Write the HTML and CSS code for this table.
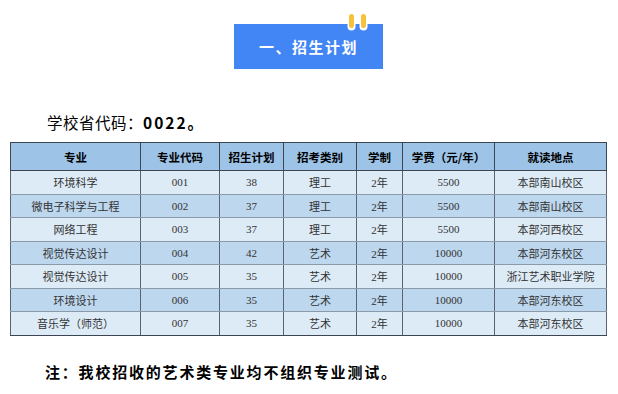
FILE: index.html
```html
<!DOCTYPE html>
<html lang="zh">
<head>
<meta charset="utf-8">
<link rel="stylesheet" href="styles.css">
</head>
<body>
<div class="page">
  <div class="title-wrap">
    <div class="title-box">
      <span class="tab tab-a"></span>
      <span class="tab tab-b"></span>
      <span class="title">一、招生计划</span>
    </div>
  </div>
  <p class="code">学校省代码：<b>0022。</b></p>
  <table class="plan">
    <thead>
      <tr>
        <th class="c1">专业</th><th class="c2">专业代码</th><th class="c3">招生计划</th><th class="c4">招考类别</th><th class="c5">学制</th><th class="c6">学费（元/年）</th><th class="c7">就读地点</th>
      </tr>
    </thead>
    <tbody>
      <tr class="lt"><td>环境科学</td><td>001</td><td>38</td><td>理工</td><td>2年</td><td>5500</td><td>本部南山校区</td></tr>
      <tr class="dk"><td>微电子科学与工程</td><td>002</td><td>37</td><td>理工</td><td>2年</td><td>5500</td><td>本部南山校区</td></tr>
      <tr class="lt"><td>网络工程</td><td>003</td><td>37</td><td>理工</td><td>2年</td><td>5500</td><td>本部河西校区</td></tr>
      <tr class="dk"><td>视觉传达设计</td><td>004</td><td>42</td><td>艺术</td><td>2年</td><td>10000</td><td>本部河东校区</td></tr>
      <tr class="lt"><td>视觉传达设计</td><td>005</td><td>35</td><td>艺术</td><td>2年</td><td>10000</td><td>浙江艺术职业学院</td></tr>
      <tr class="dk"><td>环境设计</td><td>006</td><td>35</td><td>艺术</td><td>2年</td><td>10000</td><td>本部河东校区</td></tr>
      <tr class="lt"><td>音乐学（师范）</td><td>007</td><td>35</td><td>艺术</td><td>2年</td><td>10000</td><td>本部河东校区</td></tr>
    </tbody>
  </table>
  <p class="note">注：我校招收的艺术类专业均不组织专业测试。</p>
</div>
</body>
</html>
```
FILE: styles.css
```css
html, body {
  margin: 0;
  padding: 0;
  background: #ffffff;
}
.page {
  width: 618px;
  height: 394px;
  padding-top: 24px;
  box-sizing: border-box;
  font-family: "Noto Sans CJK SC", "Noto Sans", sans-serif;
  color: #000;
}
.title-wrap {
  display: flex;
  justify-content: flex-start;
  padding-left: 234px;
}
.title-box {
  position: relative;
  width: 149px;
  height: 45px;
  background: #4285f4;
  display: flex;
  align-items: center;
  justify-content: center;
}
.title {
  color: #fff;
  font-weight: bold;
  font-size: 15px;
  letter-spacing: 1.5px;
  line-height: 1;
}
.tab {
  position: absolute;
  top: -10px;
  width: 5px;
  height: 14px;
  background: #f8c13a;
  border-radius: 3px;
  box-shadow: 0 1px 0 1.5px #ffffff;
}
.tab-a { left: 115px; }
.tab-b { left: 127px; }
.code {
  margin: 43px 0 0 47px;
  font-size: 15.5px;
  line-height: 20px;
  letter-spacing: 0.5px;
}
.code b {
  font-weight: bold;
  letter-spacing: 2px;
}
.plan {
  margin: 10px 0 0 10px;
  width: 596px;
  border-collapse: collapse;
  table-layout: fixed;
}
.plan th, .plan td {
  border: 1px solid #5a6470;
  text-align: center;
  padding: 0;
}
.plan th {
  height: 27px;
  background: #9dc3e6;
  font-size: 11.5px;
  font-weight: bold;
  border-color: #3c4652;
}
.plan td {
  height: 22.5px;
  font-size: 11px;
  font-family: "Liberation Serif", "Noto Sans CJK SC", serif;
  color: #333;
  border-top-color: #8a9aa8;
  border-bottom-color: #8a9aa8;
}
.plan tr.lt td { background: #ddebf7; }
.plan tr.dk td { background: #bdd7ee; }
.plan tbody tr:last-child td { border-bottom-color: #3c4652; }
.c1 { width: 129px; }
.c2 { width: 78px; }
.c3 { width: 63px; }
.c4 { width: 72px; }
.c5 { width: 45px; }
.c6 { width: 91px; }
.c7 { width: 111px; }
.note {
  margin: 26px 0 0 45px;
  font-size: 15px;
  font-weight: bold;
  letter-spacing: 1.8px;
  line-height: 20px;
}
```
